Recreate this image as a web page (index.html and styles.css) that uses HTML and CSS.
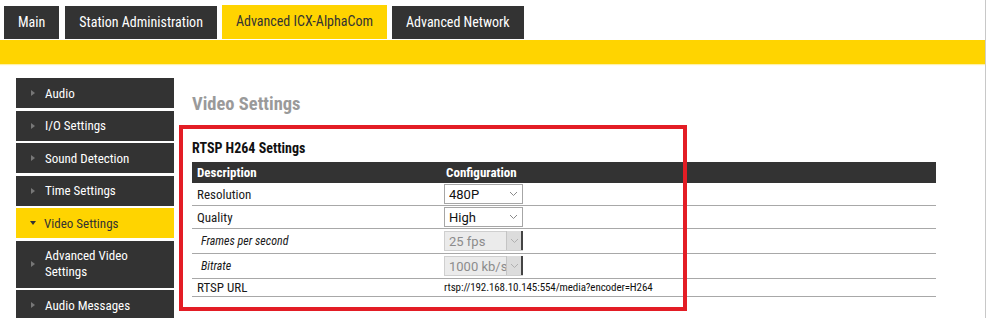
FILE: index.html
```html
<!DOCTYPE html>
<html>
<head>
<meta charset="utf-8">
<title>Video Settings</title>
<link rel="stylesheet" href="styles.css">
</head>
<body>
<div class="page">
  <nav class="tabs">
    <div class="tab">Main</div>
    <div class="tab">Station Administration</div>
    <div class="tab active">Advanced ICX-AlphaCom</div>
    <div class="tab">Advanced Network</div>
  </nav>
  <div class="bar"></div>
  <div class="body">
    <aside class="side">
      <div class="item"><span class="tri"></span><span class="lbl">Audio</span></div>
      <div class="item"><span class="tri"></span><span class="lbl">I/O Settings</span></div>
      <div class="item"><span class="tri"></span><span class="lbl">Sound Detection</span></div>
      <div class="item"><span class="tri"></span><span class="lbl">Time Settings</span></div>
      <div class="item active"><span class="tri down"></span><span class="lbl">Video Settings</span></div>
      <div class="item tall"><span class="tri"></span><span class="lbl">Advanced Video<br>Settings</span></div>
      <div class="item"><span class="tri"></span><span class="lbl">Audio Messages</span></div>
    </aside>
    <main class="main">
      <h1 class="title">Video Settings</h1>
      <h2 class="sub">RTSP H264 Settings</h2>
      <div class="table">
        <div class="row head"><div class="c1">Description</div><div class="c2">Configuration</div></div>
        <div class="row r1"><div class="c1">Resolution</div><div class="c2"><span class="sel"><span class="val">480P</span><svg class="chev" width="9" height="6" viewBox="0 0 9 6"><path d="M1 1l3.5 3.5L8 1" fill="none" stroke="#8a8a8a" stroke-width="1"/></svg></span></div></div>
        <div class="row r1"><div class="c1">Quality</div><div class="c2"><span class="sel"><span class="val">High</span><svg class="chev" width="9" height="6" viewBox="0 0 9 6"><path d="M1 1l3.5 3.5L8 1" fill="none" stroke="#8a8a8a" stroke-width="1"/></svg></span></div></div>
        <div class="row r2"><div class="c1 it">Frames per second</div><div class="c2"><span class="sel dis"><span class="val">25 fps</span><span class="abox"><svg width="9" height="6" viewBox="0 0 9 6"><path d="M1 1l3.5 3.5L8 1" fill="none" stroke="#b0b0b0" stroke-width="1"/></svg></span></span></div></div>
        <div class="row r2"><div class="c1 it">Bitrate</div><div class="c2"><span class="sel dis"><span class="val">1000 kb/s</span><span class="abox"><svg width="9" height="6" viewBox="0 0 9 6"><path d="M1 1l3.5 3.5L8 1" fill="none" stroke="#b0b0b0" stroke-width="1"/></svg></span></span></div></div>
        <div class="row r3"><div class="c1">RTSP URL</div><div class="c2 url">rtsp://192.168.10.145:554/media?encoder=H264</div></div>
      </div>
      <div class="mark"></div>
    </main>
  </div>
</div>
</body>
</html>
```
FILE: styles.css
```css
* { box-sizing: border-box; }
html, body { margin: 0; padding: 0; background: #fff; }
body {
  font-family: "Roboto Condensed", "Liberation Sans Narrow", "Roboto", sans-serif;
  color: #222;
  width: 987px;
  height: 318px;
  overflow: hidden;
}
.page {
  width: 986px;
  height: 318px;
  border-right: 1px solid #c8c8c8;
}
.tabs {
  display: flex;
  align-items: flex-end;
  gap: 5px;
  padding: 0 0 0 4px;
  height: 39px;
}
.tab {
  height: 33px;
  background: #333333;
  color: #fff;
  font-size: 14px;
  line-height: 33px;
  padding: 0 14px;
}
.tab:first-child { margin-right: 1px; }
.tab.active {
  background: #ffd400;
  color: #333;
  height: 34px;
  line-height: 33px;
}
.bar {
  margin-top: 1px;
  height: 24px;
  background: #ffd400;
  box-shadow: 0 1px 1px #fff1a8;
}
.body {
  display: flex;
  gap: 18px;
  padding-left: 16px;
}
.side {
  width: 158px;
  padding-top: 14px;
  display: flex;
  flex-direction: column;
  gap: 2.5px;
}
.item {
  height: 30px;
  background: #333333;
  color: #fff;
  font-size: 13px;
  display: flex;
  align-items: center;
  padding-left: 14px;
}
.item.tall { height: 47px; line-height: 16px; }
.item.active { background: #ffd400; color: #333; }
.tri {
  width: 0; height: 0;
  border-top: 3.5px solid transparent;
  border-bottom: 3.5px solid transparent;
  border-left: 4px solid #777;
  margin-right: 10px;
  margin-left: 1px;
}
.tri.down {
  border-left: 3.5px solid transparent;
  border-right: 3.5px solid transparent;
  border-top: 4px solid #333;
  border-bottom: 0;
  margin-left: 0;
  margin-right: 8px;
}
.main {
  position: relative;
  flex: 0 0 auto;
  width: 760px;
}
.title {
  margin: 0;
  padding-top: 29px;
  font-size: 18.5px;
  font-weight: bold;
  color: #9a9a9a;
  line-height: 22px;
}
.sub {
  margin: 0;
  padding-top: 24px;
  font-size: 14px;
  font-weight: bold;
  color: #111;
  line-height: 18px;
}
.table {
  margin-top: 5px;
  width: 744px;
  font-size: 13px;
}
.row {
  display: flex;
  align-items: center;
  border-bottom: 1px solid #a8a8a8;
}
.row.head {
  background: #333333;
  color: #fff;
  font-weight: bold;
  height: 21px;
  border-bottom: 0;
}
.r1 { height: 23px; }
.r2 { height: 25px; }
.r3 { height: 18px; }
.c1 { width: 252px; padding-left: 5px; color: #1a1a1a; }
.head .c1, .head .c2 { color: #fff; }
.head .c2 { padding-left: 2px; }
.c1.it { font-style: italic; font-size: 12px; padding-left: 9px; }
.sel {
  display: flex;
  align-items: center;
  width: 79px;
  height: 20px;
  border: 1px solid #a6a6a6;
  background: #fff;
  padding-left: 4px;
  padding-right: 4px;
  font-size: 13px;
  color: #111;
  font-family: "Roboto", "Liberation Sans", sans-serif;
}
.val {
  flex: 1 1 auto;
  min-width: 0;
  white-space: nowrap;
  overflow: hidden;
}
.chev { display: block; flex: 0 0 auto; }
.sel.dis {
  background: #ebebeb;
  border-color: #cfcfcf;
  color: #8c8c8c;
  padding-right: 0;
}
.abox {
  flex: 0 0 auto;
  width: 17px;
  height: 19px;
  align-self: flex-start;
  background: #dcdcdc;
  border-left: 1px solid #c4c4c4;
  border-right: 2px solid #444;
  display: flex;
  align-items: center;
  justify-content: center;
  margin-top: -1px;
  margin-right: -1px;
}
.url {
  font-size: 11px;
  letter-spacing: -0.1px;
  color: #111;
  white-space: nowrap;
}
.mark {
  position: absolute;
  left: -13px;
  top: 61px;
  width: 508px;
  height: 186px;
  border: 4px solid #e31d25;
}
```
